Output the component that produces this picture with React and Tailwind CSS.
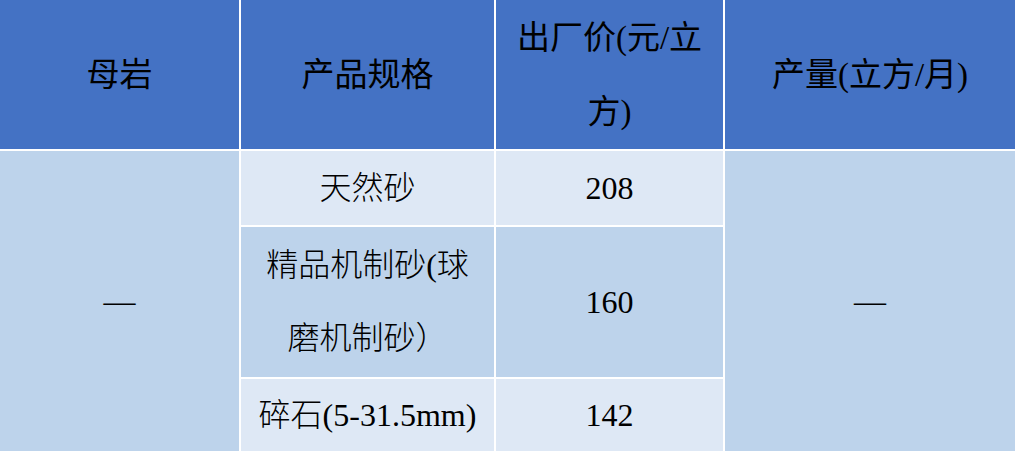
const serif = "font-['Liberation_Serif','Noto_Sans_CJK_SC',serif]";

const Cell = ({ className = "", children }) => (
  <div className={`flex items-center justify-center text-center text-black ${className}`}>
    {children}
  </div>
);

export default function App() {
  const head = "bg-[#4472c4] text-[33px] leading-[74px]";
  const dark = "bg-[#bdd3eb] text-[32px] leading-[73px] font-light";
  const light = "bg-[#dee8f5] text-[32px] leading-[73px] font-light";

  return (
    <div className={`w-[1015px] h-[451px] overflow-hidden bg-white ${serif}`}>
      <div className="grid grid-cols-[239px_253px_227px_1fr] grid-rows-[149px_74px_150px_72px] gap-[2px]">
        <Cell className={head}>母岩</Cell>
        <Cell className={head}>产品规格</Cell>
        <Cell className={head}>
          <span>
            出厂价(元/立
            <br />
            方)
          </span>
        </Cell>
        <Cell className={head}>产量(立方/月)</Cell>

        <Cell className={`${dark} row-span-3`}>—</Cell>
        <Cell className={light}>天然砂</Cell>
        <Cell className={light}>208</Cell>
        <Cell className={`${dark} row-span-3 col-start-4 row-start-2`}>—</Cell>

        <Cell className={dark}>
          <span>
            精品机制砂(球
            <br />
            磨机制砂）
          </span>
        </Cell>
        <Cell className={dark}>160</Cell>

        <Cell className={light}>碎石(5-31.5mm)</Cell>
        <Cell className={light}>142</Cell>
      </div>
    </div>
  );
}
